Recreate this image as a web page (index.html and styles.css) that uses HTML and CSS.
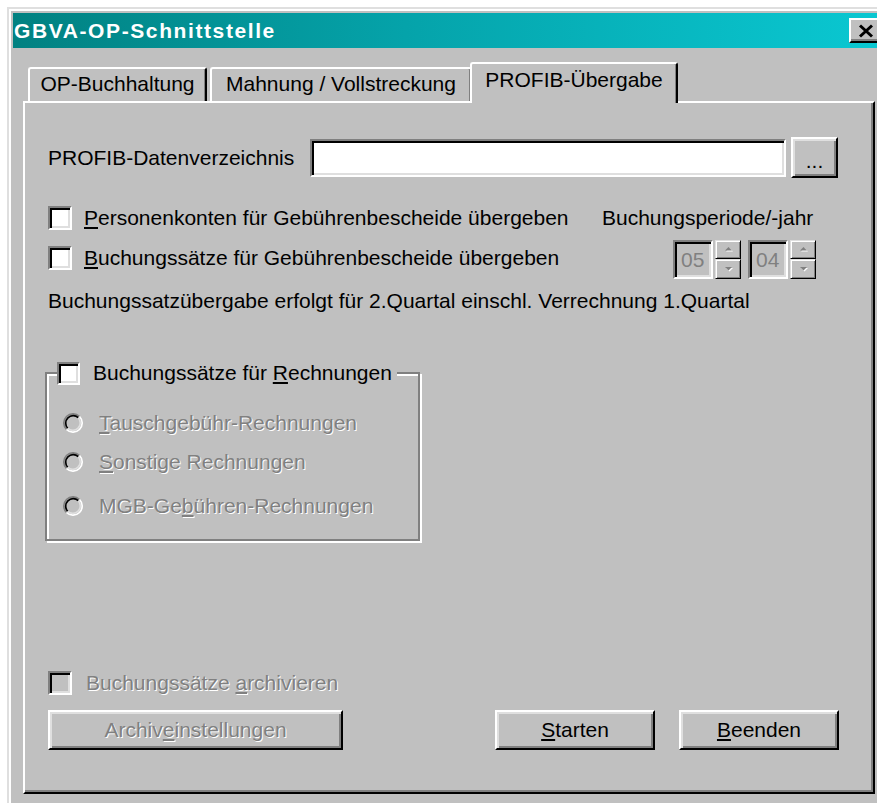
FILE: index.html
```html
<!DOCTYPE html>
<html lang="de">
<head>
<meta charset="utf-8">
<title>GBVA-OP-Schnittstelle</title>
<link rel="stylesheet" href="styles.css">
</head>
<body>
<div class="window">
  <div class="titlebar">
    <span class="title">GBVA-OP-Schnittstelle</span>
    <span class="close-btn">
      <svg width="16" height="14" viewBox="0 0 16 14"><path d="M2 1.5 L14 12.5 M14 1.5 L2 12.5" stroke="#000" stroke-width="3" fill="none"/></svg>
    </span>
  </div>

  <div class="tabs">
    <div class="tab tab-op">OP-Buchhaltung</div>
    <div class="tab tab-mahn">Mahnung / Vollstreckung</div>
    <div class="tab tab-profib active">PROFIB-Übergabe</div>
  </div>

  <div class="panel">
    <div class="dir-row">
      <span class="dir-label">PROFIB-Datenverzeichnis</span>
      <span class="textbox"></span>
      <span class="btn btn-browse">...</span>
    </div>

    <div class="options">
      <div class="check-row">
        <span class="check"></span>
        <span class="lbl"><u>P</u>ersonenkonten für Gebührenbescheide übergeben</span>
      </div>
      <div class="period-label">Buchungsperiode/-jahr</div>
      <div class="check-row">
        <span class="check"></span>
        <span class="lbl"><u>B</u>uchungssätze für Gebührenbescheide übergeben</span>
      </div>
      <div class="period">
        <div class="spinner">
          <span class="spin-field">05</span>
          <span class="spin-arrows">
            <span class="spin-btn"><svg width="9" height="6" viewBox="0 0 9 6"><path d="M2 5.5 L5.5 2 L9 5.5 Z" fill="#fff"/><path d="M1 4.5 L4.5 1 L8 4.5 Z" fill="#808080"/></svg></span>
            <span class="spin-btn"><svg width="9" height="6" viewBox="0 0 9 6"><path d="M2 2 L5.5 5.5 L9 2 Z" fill="#fff"/><path d="M1 1 L4.5 4.5 L8 1 Z" fill="#808080"/></svg></span>
          </span>
        </div>
        <div class="spinner">
          <span class="spin-field">04</span>
          <span class="spin-arrows">
            <span class="spin-btn"><svg width="9" height="6" viewBox="0 0 9 6"><path d="M2 5.5 L5.5 2 L9 5.5 Z" fill="#fff"/><path d="M1 4.5 L4.5 1 L8 4.5 Z" fill="#808080"/></svg></span>
            <span class="spin-btn"><svg width="9" height="6" viewBox="0 0 9 6"><path d="M2 2 L5.5 5.5 L9 2 Z" fill="#fff"/><path d="M1 1 L4.5 4.5 L8 1 Z" fill="#808080"/></svg></span>
          </span>
        </div>
      </div>
    </div>

    <p class="info">Buchungssatzübergabe erfolgt für 2.Quartal einschl. Verrechnung 1.Quartal</p>

    <fieldset class="group">
      <legend class="group-title">
        <span class="check"></span>
        <span class="lbl">Buchungssätze für <u>R</u>echnungen</span>
      </legend>
      <div class="radio-row">
        <svg class="radio" width="20" height="20" viewBox="0 0 12 12">
          <circle cx="6" cy="6" r="4.5" fill="#c0c0c0"/>
          <path d="M2.11 9.89 A5.5 5.5 0 0 1 9.89 2.11" stroke="#808080" fill="none"/>
          <path d="M9.89 2.11 A5.5 5.5 0 0 1 2.11 9.89" stroke="#fff" fill="none"/>
          <path d="M2.82 9.18 A4.5 4.5 0 0 1 9.18 2.82" stroke="#000" fill="none"/>
          <path d="M9.18 2.82 A4.5 4.5 0 0 1 2.82 9.18" stroke="#dfdfdf" fill="none"/>
        </svg>
        <span class="lbl disabled"><u>T</u>auschgebühr-Rechnungen</span>
      </div>
      <div class="radio-row second">
        <svg class="radio" width="20" height="20" viewBox="0 0 12 12">
          <circle cx="6" cy="6" r="4.5" fill="#c0c0c0"/>
          <path d="M2.11 9.89 A5.5 5.5 0 0 1 9.89 2.11" stroke="#808080" fill="none"/>
          <path d="M9.89 2.11 A5.5 5.5 0 0 1 2.11 9.89" stroke="#fff" fill="none"/>
          <path d="M2.82 9.18 A4.5 4.5 0 0 1 9.18 2.82" stroke="#000" fill="none"/>
          <path d="M9.18 2.82 A4.5 4.5 0 0 1 2.82 9.18" stroke="#dfdfdf" fill="none"/>
        </svg>
        <span class="lbl disabled"><u>S</u>onstige Rechnungen</span>
      </div>
      <div class="radio-row third">
        <svg class="radio" width="20" height="20" viewBox="0 0 12 12">
          <circle cx="6" cy="6" r="4.5" fill="#c0c0c0"/>
          <path d="M2.11 9.89 A5.5 5.5 0 0 1 9.89 2.11" stroke="#808080" fill="none"/>
          <path d="M9.89 2.11 A5.5 5.5 0 0 1 2.11 9.89" stroke="#fff" fill="none"/>
          <path d="M2.82 9.18 A4.5 4.5 0 0 1 9.18 2.82" stroke="#000" fill="none"/>
          <path d="M9.18 2.82 A4.5 4.5 0 0 1 2.82 9.18" stroke="#dfdfdf" fill="none"/>
        </svg>
        <span class="lbl disabled">MGB-Ge<u>b</u>ühren-Rechnungen</span>
      </div>
    </fieldset>

    <div class="bottom">
      <div class="check-row archive">
        <span class="check off"></span>
        <span class="lbl disabled">Buchungssätze <u>a</u>rchivieren</span>
      </div>
      <div class="button-row">
        <span class="btn btn-archive"><span class="disabled">Archiv<u>e</u>instellungen</span></span>
        <span class="btn btn-start"><u>S</u>tarten</span>
        <span class="btn btn-quit"><u>B</u>eenden</span>
      </div>
    </div>
  </div>
</div>
</body>
</html>
```

FILE: styles.css
```css
html, body {
  margin: 0;
  padding: 0;
  overflow: hidden;
  background: #fff;
}

body {
  width: 877px;
  height: 803px;
  font-family: "Liberation Sans", Arial, sans-serif;
  font-size: 21px;
  line-height: 24px;
  color: #000;
}

u {
  text-decoration-thickness: 2px;
  text-underline-offset: 2px;
}

/* dialog frame */
.window {
  box-sizing: border-box;
  width: 884px;
  height: 820px;
  margin: 7px 0 0 7px;
  padding: 6px 6px 0 6px;
  background: #c0c0c0;
  box-shadow: inset 2px 2px 0 #dfdfdf, inset 4px 4px 0 #fff;
}

.titlebar {
  height: 35px;
  display: flex;
  align-items: center;
  background: linear-gradient(90deg, #018181 0%, #05a3aa 45%, #0ac8d2 100%);
}

.title {
  padding-left: 1px;
  color: #fff;
  font-weight: bold;
  font-size: 21px;
  letter-spacing: 1.6px;
}

.close-btn {
  box-sizing: border-box;
  width: 34px;
  height: 25px;
  margin-left: auto;
  margin-right: 2px;
  display: flex;
  align-items: center;
  justify-content: center;
  background: #c0c0c0;
  border: 2px solid;
  border-color: #fff #000 #000 #fff;
  box-shadow: inset -2px -2px 0 #808080;
}

/* tab strip */
.tabs {
  display: flex;
  align-items: flex-end;
  height: 39px;
  margin: 14px 10px 0 10px;
  padding-left: 5px;
}

.tab {
  box-sizing: border-box;
  height: 34px;
  padding-top: 3px;
  text-align: center;
  white-space: nowrap;
  background: #c0c0c0;
  border-top: 2px solid #fff;
  border-left: 2px solid #fff;
  border-right: 2px solid #000;
  border-radius: 3px 3px 0 0;
  box-shadow: inset -1px 0 0 #808080;
}

.tab-op { width: 179px; }
.tab-mahn { width: 262px; margin-left: 3px; }

.tab.active {
  position: relative;
  z-index: 1;
  width: 208px;
  height: 41px;
  margin-left: -2px;
  margin-bottom: -2px;
  padding-top: 4px;
}

/* page of the tab control */
.panel {
  box-sizing: border-box;
  height: 693px;
  margin: 0 10px;
  padding: 0 0 42px 23px;
  display: flex;
  flex-direction: column;
  border: 2px solid;
  border-color: #fff #000 #000 #fff;
  box-shadow: inset -2px -2px 0 #808080;
}

.dir-row {
  display: flex;
  align-items: center;
  height: 41px;
  margin-top: 34px;
}

.dir-label {
  width: 262px;
  flex: none;
}

.textbox {
  box-sizing: border-box;
  width: 476px;
  height: 38px;
  background: #fff;
  border: 2px solid;
  border-color: #808080 #fff #fff #808080;
  box-shadow: inset 2px 2px 0 #000, inset -2px -2px 0 #dfdfdf;
}

.btn {
  box-sizing: border-box;
  display: flex;
  align-items: center;
  justify-content: center;
  height: 40px;
  background: #c0c0c0;
  border: 2px solid;
  border-color: #fff #000 #000 #fff;
  box-shadow: inset 2px 2px 0 #dfdfdf, inset -2px -2px 0 #808080;
  white-space: nowrap;
}

.btn-browse {
  width: 47px;
  height: 41px;
  margin-left: 5px;
  padding-top: 6px;
}

/* check boxes and the period block */
.options {
  display: grid;
  grid-template-columns: 554px auto;
  grid-auto-rows: 40px;
  align-items: center;
  margin-top: 20px;
}

.check-row {
  display: flex;
  align-items: center;
}

.check {
  box-sizing: border-box;
  flex: none;
  width: 24px;
  height: 24px;
  background: #fff;
  border: 2px solid;
  border-color: #808080 #fff #fff #808080;
  box-shadow: inset 2px 2px 0 #000, inset -2px -2px 0 #dfdfdf;
}

.check.off {
  background: #c0c0c0;
}

.check-row .lbl {
  margin-left: 12px;
  white-space: nowrap;
}

.period-label {
  white-space: nowrap;
}

.period {
  display: flex;
  gap: 7px;
  margin-left: 71px;
  margin-top: 2px;
}

.spinner {
  display: flex;
  gap: 2px;
}

.spin-field {
  box-sizing: border-box;
  width: 40px;
  height: 39px;
  padding: 6px 0 0 6px;
  color: #808080;
  background: #c0c0c0;
  border: 2px solid;
  border-color: #808080 #fff #fff #808080;
  box-shadow: inset 2px 2px 0 #000, inset -2px -2px 0 #dfdfdf;
}

.spin-arrows {
  display: flex;
  flex-direction: column;
  width: 26px;
  height: 39px;
}

.spin-btn {
  box-sizing: border-box;
  flex: 1;
  display: flex;
  align-items: center;
  justify-content: center;
  background: #c0c0c0;
  border: 1px solid;
  border-color: #dfdfdf #000 #000 #dfdfdf;
  box-shadow: inset 1px 1px 0 #fff, inset -1px -1px 0 #808080;
}

.info {
  margin: 11px 0 0 0;
  white-space: nowrap;
}

/* group box */
.group {
  box-sizing: border-box;
  width: 375px;
  margin: 48px 0 0 -3px;
  padding: 26px 0 21px 16px;
  border: 2px solid #808080;
  box-shadow: inset 2px 2px 0 #fff, 2px 2px 0 #fff;
  min-inline-size: 0;
}

.group-title {
  display: flex;
  align-items: center;
  margin-left: -6px;
  padding: 0 5px 0 0;
  background: #c0c0c0;
}

.group-title .check {
  width: 23px;
  height: 23px;
}

.group-title .lbl {
  margin-left: 13px;
}

.radio-row {
  display: flex;
  align-items: center;
  height: 24px;
}

.radio-row.second { margin-top: 15px; }
.radio-row.third { margin-top: 20px; }

.radio {
  flex: none;
}

.radio-row .lbl {
  margin-left: 16px;
}

.disabled {
  color: #808080;
  text-shadow: 1px 1px 0 #fff;
}

/* archive option and command buttons */
.bottom {
  margin-top: auto;
}

.archive {
  height: 25px;
}

.archive .lbl {
  margin-left: 14px;
}

.button-row {
  display: flex;
  margin-top: 15px;
}

.btn-archive { width: 295px; }
.btn-start { width: 160px; margin-left: 152px; }
.btn-quit { width: 160px; margin-left: 24px; }
```
